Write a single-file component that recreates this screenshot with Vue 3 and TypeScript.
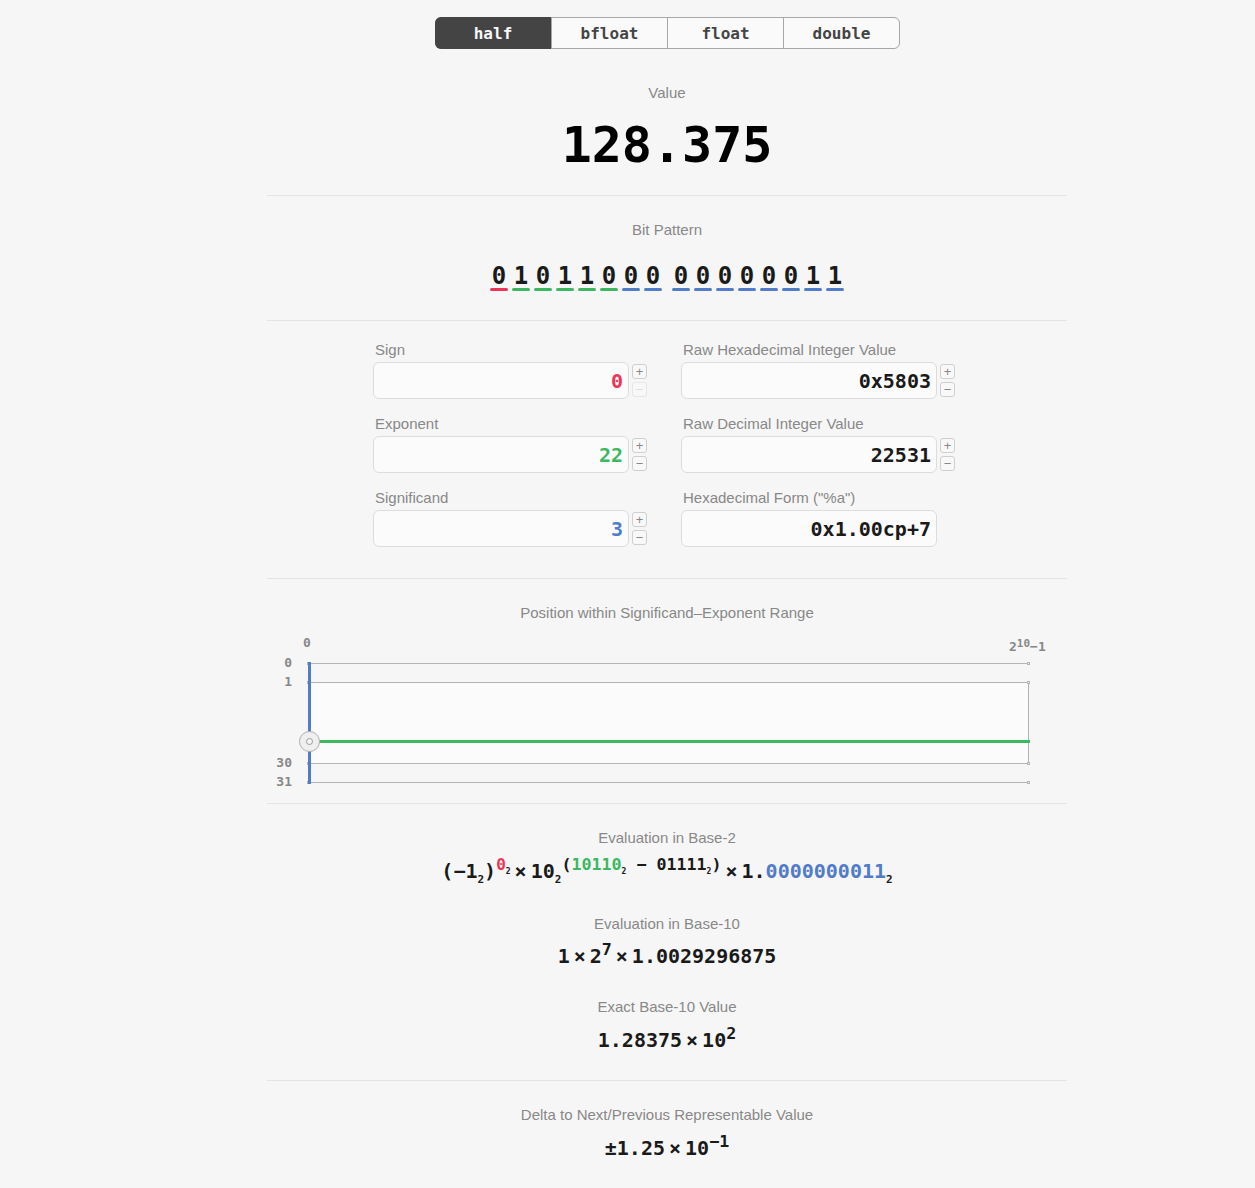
<script setup lang="ts">
const tabs = ['half', 'bfloat', 'float', 'double']
const bits = '0101100000000011'.split('').map((b, i) => ({
  b,
  cls: i === 0 ? 'sign' : i < 6 ? 'exp' : 'sig',
  gap: i === 8,
}))
const fields = [
  { label: 'Sign', value: '0', cls: 'red', step: true, minusOff: true },
  { label: 'Raw Hexadecimal Integer Value', value: '0x5803', cls: '', step: true, minusOff: false },
  { label: 'Exponent', value: '22', cls: 'green', step: true, minusOff: false },
  { label: 'Raw Decimal Integer Value', value: '22531', cls: '', step: true, minusOff: false },
  { label: 'Significand', value: '3', cls: 'blue', step: true, minusOff: false },
  { label: 'Hexadecimal Form ("%a")', value: '0x1.00cp+7', cls: '', step: false, minusOff: false },
]
const rows = [
  { y: 33, label: '0' },
  { y: 52, label: '1' },
  { y: 133, label: '30' },
  { y: 152, label: '31' },
]
</script>

<template>
  <main class="page">
    <nav class="tabs">
      <button v-for="(t, i) in tabs" :key="t" class="tab" :class="{ on: i === 0 }">{{ t }}</button>
    </nav>

    <section class="s-value">
      <div class="label">Value</div>
      <div class="big">128.375</div>
    </section>

    <section class="s-bits">
      <div class="label">Bit Pattern</div>
      <div class="bits">
        <span v-for="(x, i) in bits" :key="i" class="bit" :class="[x.cls, { gap: x.gap }]">
          <span class="digit">{{ x.b }}</span>
          <i class="bar"></i>
        </span>
      </div>
    </section>

    <section class="s-fields">
      <div class="grid">
        <div v-for="f in fields" :key="f.label" class="field">
          <label class="flabel">{{ f.label }}</label>
          <div class="frow">
            <input class="input" :class="f.cls" :value="f.value" readonly />
            <div v-if="f.step" class="steps">
              <button class="step">+</button>
              <button class="step" :class="{ off: f.minusOff }">−</button>
            </div>
          </div>
        </div>
      </div>
    </section>

    <section class="s-chart">
      <div class="label">Position within Significand–Exponent Range</div>
      <svg class="chart" width="800" height="170" viewBox="0 0 800 170">
        <rect x="41.5" y="52.5" width="720" height="81" fill="#fbfbfb" stroke="#b4b4b4" />
        <g v-for="r in rows" :key="r.y">
          <line x1="40" :y1="r.y + 0.5" x2="762" :y2="r.y + 0.5" stroke="#b4b4b4" />
          <rect x="760.5" :y="r.y - 0.5" width="2" height="2" fill="#f6f6f6" stroke="#b4b4b4" />
          <rect x="40.5" :y="r.y - 0.5" width="2" height="2" fill="#f6f6f6" stroke="#b4b4b4" />
          <text class="axis" x="25" :y="r.y + 4" text-anchor="end">{{ r.label }}</text>
        </g>
        <text class="axis" x="40" y="17" text-anchor="middle">0</text>
        <text class="axis" x="742" y="21">2<tspan class="axis-sup" dy="-4">10</tspan><tspan dy="4">−1</tspan></text>
        <line x1="42.5" y1="32" x2="42.5" y2="154" stroke="#507cc9" stroke-width="3" />
        <line x1="42" y1="111.5" x2="763" y2="111.5" stroke="#3cb863" stroke-width="3" />
        <circle cx="42.5" cy="111.5" r="10" fill="#efefef" stroke="#aeaeae" />
        <circle cx="42.5" cy="111.5" r="3" fill="#f6f6f6" stroke="#999" />
      </svg>
    </section>

    <section class="s-evals">
      <div class="label">Evaluation in Base-2</div>
      <div class="math m-base2">(−1<sub>2</sub>)<sup class="tiny"><span class="red">0</span><sub>2</sub></sup><span class="x">×</span>10<sub>2</sub><sup>(<span class="green">10110</span><sub>2</sub> − 01111<sub>2</sub>)</sup><span class="x">×</span>1.<span class="blue">0000000011</span><sub>2</sub></div>
      <div class="label l2">Evaluation in Base-10</div>
      <div class="math m2">1<span class="x">×</span>2<sup>7</sup><span class="x">×</span>1.0029296875</div>
      <div class="label l3">Exact Base-10 Value</div>
      <div class="math m3">1.28375<span class="x">×</span>10<sup>2</sup></div>
    </section>

    <section class="s-delta">
      <div class="label">Delta to Next/Previous Representable Value</div>
      <div class="math m3">±1.25<span class="x">×</span>10<sup>−1</sup></div>
    </section>
  </main>
</template>

<style scoped>
.page {
  width: 800px;
  margin-left: 267px;
  height: 1188px;
  box-sizing: border-box;
  padding-top: 17px;
  overflow: hidden;
  color: #1a1a1a;
  font-family: "DejaVu Sans Mono", monospace;
  font-weight: 700;
}
section { border-bottom: 1px solid #e4e4e4; text-align: center; }
.label {
  font: 400 15px/18px "Liberation Sans", Arial, sans-serif;
  color: #888;
}
.tabs {
  display: flex;
  width: 465px;
  height: 32px;
  box-sizing: border-box;
  margin: 0 0 0 168px;
  border: 1px solid #a6a6a6;
  border-radius: 6px;
  background: #fafafa;
}
.tab {
  flex: none;
  width: 116px;
  box-sizing: border-box;
  border: 0;
  border-left: 1px solid #a6a6a6;
  background: transparent;
  font: 700 16px/32px "DejaVu Sans Mono", monospace;
  color: #444;
  padding: 0;
}
.tab.on {
  background: #444;
  color: #f8f8f8;
  border-left: 0;
  margin: -1px 0 -1px -1px;
  padding-top: 1px;
  border-radius: 6px 0 0 6px;
}
.s-value { padding-top: 35px; height: 111px; }
.big {
  margin-top: 13px;
  font-size: 50px;
  line-height: 60px;
  color: #000;
}
.s-bits { padding-top: 25px; height: 99px; }
.bits { display: flex; justify-content: center; margin-top: 23px; }
.bit {
  display: flex;
  flex-direction: column;
  width: 18px;
  margin: 0 2px;
}
.bit.gap { margin-left: 8px; }
.digit {
  height: 26px;
  font-size: 24px;
  line-height: 28px;
}
.bar { display: block; height: 3px; border-radius: 2px; }
.bit.sign .bar { background: #ee3559; }
.bit.exp .bar { background: #3cb863; }
.bit.sig .bar { background: #507cc9; }
.s-fields { padding-top: 20px; height: 237px; }
.grid {
  display: grid;
  grid-template-columns: 308px 308px;
  margin-left: 106px;
  row-gap: 16px;
}
.field { text-align: left; }
.flabel {
  display: block;
  font: 400 15px/18px "Liberation Sans", Arial, sans-serif;
  color: #888;
  margin-left: 2px;
  height: 21px;
}
.frow { display: flex; gap: 3px; align-items: flex-start; }
.input {
  width: 256px;
  height: 37px;
  box-sizing: border-box;
  border: 1px solid #dcdcdc;
  border-radius: 6px;
  background: #fbfbfb;
  padding: 0 5px;
  text-align: right;
  font: 700 20px "DejaVu Sans Mono", monospace;
  color: #1a1a1a;
  outline: none;
}
.steps { display: flex; flex-direction: column; gap: 3px; padding-top: 2px; }
.step {
  width: 15px;
  height: 15px;
  padding: 0;
  border: 1px solid #cfcfcf;
  border-radius: 3px;
  background: #f8f8f8;
  color: #888;
  font: 400 13px/12px "Liberation Sans", Arial, sans-serif;
}
.step.off { color: #ddd; border-color: #e6e6e6; }
.red { color: #ee3559; }
.green { color: #3cb863; }
.blue { color: #507cc9; }
.input.red { color: #ee3559; }
.input.green { color: #3cb863; }
.input.blue { color: #507cc9; }
.s-chart { padding-top: 25px; height: 199px; }
.chart { display: block; margin-top: 8px; }
.axis { font: 700 13px "DejaVu Sans Mono", monospace; fill: #888; }
.axis-sup { font-size: 11px; }
.s-evals { padding-top: 25px; height: 251px; }
.math {
  font-size: 20px;
  line-height: 28px;
  white-space: pre;
}
.m-base2 { margin-top: 10px; }
.m2 { margin-top: 9px; }
.m3 { margin-top: 10px; }
.math sup, .math sub { line-height: 0; }
.math sub { font-size: 11px; }
.math sup sub { font-size: 8px; }
.math sup.tiny { font-size: 16px; }
.x { margin: 0 4px; }
.l2 { margin-top: 30px; }
.l3 { margin-top: 28px; }
.s-delta { padding-top: 25px; border-bottom: 0; }
</style>

<style>
html, body { background: #f6f6f6; }
</style>
